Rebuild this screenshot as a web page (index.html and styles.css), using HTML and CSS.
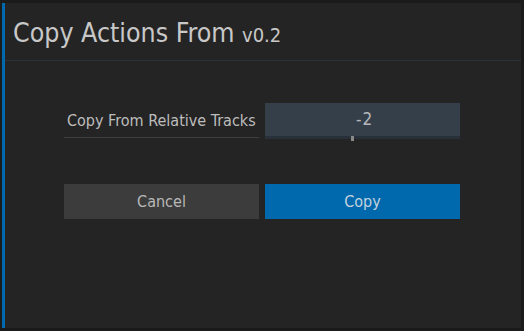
FILE: index.html
```html
<!DOCTYPE html>
<html lang="en">
<head>
    <meta charset="UTF-8">
    <title>Copy Actions From</title>
    <link rel="stylesheet" href="styles.css">
</head>
<body>
    <div class="panel">
        <div class="panel-header">
            Copy Actions From <span class="version">v0.2</span>
        </div>
        <div class="panel-body">
            <div class="form-row">
                <div class="field-label">Copy From Relative Tracks</div>
                <div class="slider-input">
                    <div class="slider-value">-2</div>
                    <div class="slider-track">
                        <div class="slider-tick" style="left: 44%"></div>
                    </div>
                </div>
            </div>
            <div class="form-row buttons">
                <button class="btn btn-cancel">Cancel</button>
                <button class="btn btn-copy">Copy</button>
            </div>
        </div>
    </div>
</body>
</html>
```

FILE: styles.css
```css
body {
    margin: 0;
    padding: 3px 3px 3px 2px;
    background-color: #1b1b1b;
    font-family: "DejaVu Sans", "Liberation Sans", sans-serif;
    font-stretch: condensed;
    color: #c4c4c4;
}

.panel {
    height: 325px;
    box-sizing: border-box;
    background-color: #242424;
    border-left: 3px solid #0068ad;
}

.panel-header {
    height: 58px;
    box-sizing: border-box;
    padding: 15px 0 0 8px;
    border-bottom: 1px solid #24333d;
    font-size: 26.5px;
    line-height: 30px;
    color: #c8c8c8;
}

.version {
    font-size: 20px;
}

.panel-body {
    padding: 42px 0 0 59px;
}

.form-row {
    display: flex;
    gap: 6px;
    width: 396px;
}

.form-row.buttons {
    margin-top: 45px;
}

.field-label {
    width: 195px;
    height: 35px;
    box-sizing: border-box;
    padding: 8px 0 0 3px;
    border-bottom: 1px solid #3e3e3e;
    font-size: 16px;
    color: #bdbdbd;
}

.slider-input {
    width: 195px;
    height: 36px;
    display: flex;
    flex-direction: column;
    background-color: #353f49;
}

.slider-value {
    flex-grow: 1;
    padding-left: 4px;
    text-align: center;
    font-size: 17px;
    line-height: 33px;
    letter-spacing: 1px;
    color: #b4b8bc;
}

.slider-track {
    position: relative;
    height: 5px;
    background-color: #283039;
}

.slider-tick {
    position: absolute;
    top: 0;
    width: 3px;
    height: 5px;
    background-color: #8a8a8a;
}

.btn {
    width: 195px;
    height: 35px;
    border: none;
    padding: 0;
    font-family: "DejaVu Sans", "Liberation Sans", sans-serif;
    font-stretch: condensed;
    font-size: 16px;
    cursor: pointer;
}

.btn-cancel {
    background-color: #3c3c3c;
    color: #b8b8b8;
}

.btn-copy {
    background-color: #0069ad;
    color: #c4d2de;
}
```
